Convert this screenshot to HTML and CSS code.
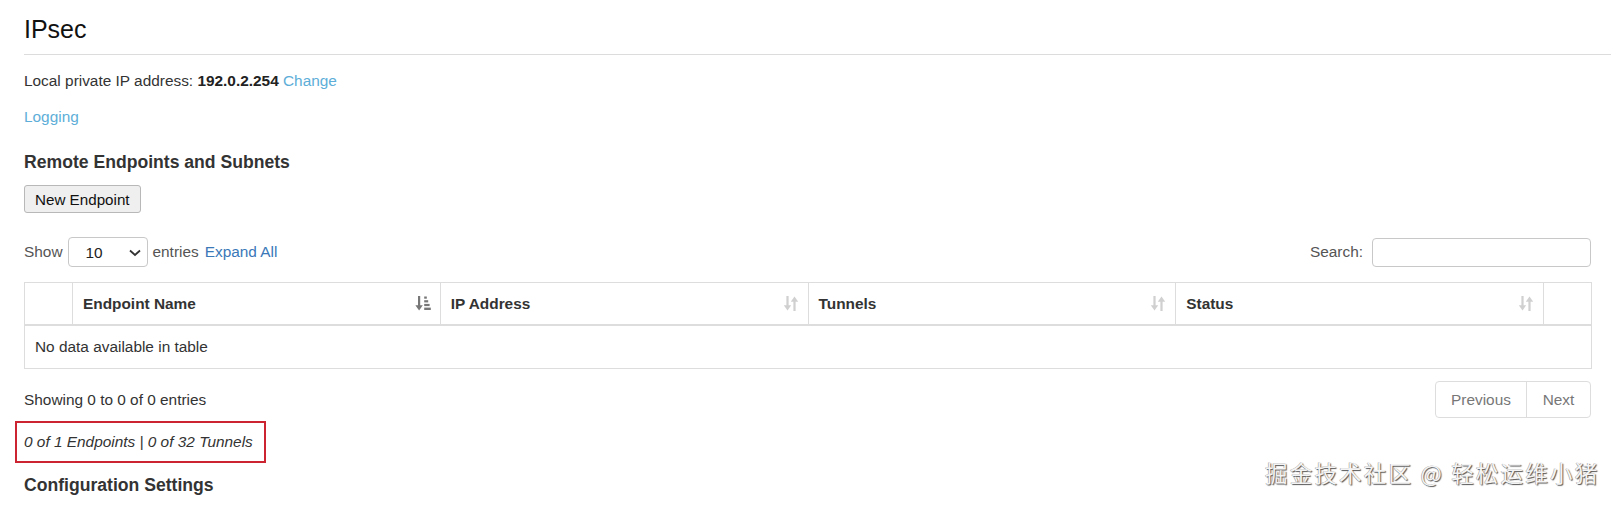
FILE: index.html
```html
<!DOCTYPE html>
<html lang="en">
<head>
<meta charset="utf-8">
<title>IPsec</title>
<link rel="stylesheet" href="styles.css">
</head>
<body>
<div class="page">
  <h1 class="title">IPsec</h1>
  <hr class="rule">
  <p class="line">Local private IP address: <strong>192.0.2.254</strong> <a class="link-light" href="#">Change</a></p>
  <p class="line"><a class="link-light" href="#">Logging</a></p>
  <h3 class="section">Remote Endpoints and Subnets</h3>
  <button class="btn">New Endpoint</button>

  <div class="controls">
    <div class="length">
      <span class="muted">Show</span>
      <span class="select-wrap">
        <select class="select"><option>10</option></select>
        <svg class="chev" width="12" height="8" viewBox="0 0 12 8"><path d="M1 1.5 L6 6 L11 1.5" fill="none" stroke="#333" stroke-width="1.8"/></svg>
      </span>
      <span class="muted">entries</span>
      <a class="link-dark" href="#">Expand All</a>
    </div>
    <label class="search"><span class="muted">Search:</span><input class="search-input" type="text"></label>
  </div>

  <table class="grid">
    <colgroup>
      <col class="c-narrow"><col class="c-wide"><col class="c-wide"><col class="c-wide"><col class="c-wide"><col class="c-narrow">
    </colgroup>
    <thead>
      <tr>
        <th></th>
        <th><div class="th-in"><span>Endpoint Name</span>
          <svg class="sort" width="16" height="17" viewBox="0 0 16 17"><g fill="#777"><rect x="3" y="1" width="2.2" height="10"/><path d="M0.4 10.2 H7.8 L4.1 15.5 Z"/><rect x="9.2" y="1.5" width="2.6" height="2.2"/><rect x="9.2" y="5.2" width="4" height="2.2"/><rect x="9.2" y="8.9" width="5.4" height="2.2"/><rect x="9.2" y="12.6" width="6.6" height="2.4"/></g></svg></div></th>
        <th><div class="th-in"><span>IP Address</span>
          <svg class="sort" width="16" height="17" viewBox="0 0 16 17"><g fill="#d0d0d0"><rect x="3.4" y="1" width="2.2" height="10"/><path d="M0.8 10.2 H8.2 L4.5 15.5 Z"/><rect x="10.4" y="6" width="2.2" height="10"/><path d="M7.8 6.8 H15.2 L11.5 1.5 Z"/></g></svg></div></th>
        <th><div class="th-in"><span>Tunnels</span>
          <svg class="sort" width="16" height="17" viewBox="0 0 16 17"><g fill="#d0d0d0"><rect x="3.4" y="1" width="2.2" height="10"/><path d="M0.8 10.2 H8.2 L4.5 15.5 Z"/><rect x="10.4" y="6" width="2.2" height="10"/><path d="M7.8 6.8 H15.2 L11.5 1.5 Z"/></g></svg></div></th>
        <th><div class="th-in"><span>Status</span>
          <svg class="sort" width="16" height="17" viewBox="0 0 16 17"><g fill="#d0d0d0"><rect x="3.4" y="1" width="2.2" height="10"/><path d="M0.8 10.2 H8.2 L4.5 15.5 Z"/><rect x="10.4" y="6" width="2.2" height="10"/><path d="M7.8 6.8 H15.2 L11.5 1.5 Z"/></g></svg></div></th>
        <th></th>
      </tr>
    </thead>
    <tbody>
      <tr><td colspan="6">No data available in table</td></tr>
    </tbody>
  </table>

  <div class="foot">
    <span>Showing 0 to 0 of 0 entries</span>
    <div class="pager"><a class="pg" href="#">Previous</a><a class="pg" href="#">Next</a></div>
  </div>

  <div class="count"><em>0 of 1 Endpoints | 0 of 32 Tunnels</em></div>

  <h3 class="section config">Configuration Settings</h3>

  <div class="watermark">掘金技术社区 @ 轻松运维小猪</div>
</div>
</body>
</html>
```

FILE: styles.css
```css
html, body {
  margin: 0;
  padding: 0;
  background: #fff;
}
body {
  font-family: "Liberation Sans", Arial, sans-serif;
  font-size: 15.4px;
  color: #333;
  overflow: hidden;
}
.page {
  position: relative;
  padding: 14px 25px 0 24px;
  height: 491px;
}
.title {
  margin: 0;
  font-size: 25px;
  line-height: 30px;
  font-weight: normal;
  color: #111;
}
.rule {
  margin: 10px -20px 0 0;
  border: 0;
  border-top: 1px solid #dcdcdc;
  height: 0;
}
.line {
  margin: 16px 0 0;
  line-height: 20px;
}
.line strong { color: #222; }
.link-light {
  color: #5daed8;
  text-decoration: none;
}
.link-dark {
  color: #3a78b8;
  text-decoration: none;
  margin-left: 1px;
}
.section {
  margin: 25px 0 0;
  font-size: 17.6px;
  line-height: 20px;
  font-weight: bold;
  color: #333;
}
.btn {
  display: block;
  margin-top: 13px;
  height: 28px;
  padding: 0 10px;
  font-family: "Liberation Sans", Arial, sans-serif;
  font-size: 15.2px;
  color: #111;
  background: #efefef;
  border: 1px solid #b8b8b8;
  border-radius: 3px;
}
.controls {
  margin-top: 24px;
  display: flex;
  justify-content: space-between;
  align-items: center;
  height: 30px;
}
.length {
  display: flex;
  align-items: center;
  gap: 5px;
}
.muted { color: #555; }
.select-wrap {
  position: relative;
  display: inline-block;
  height: 30px;
}
.select {
  appearance: none;
  -webkit-appearance: none;
  width: 80px;
  height: 30px;
  padding: 0 0 0 17px;
  font-family: "Liberation Sans", Arial, sans-serif;
  font-size: 15.4px;
  color: #222;
  background: #fff;
  border: 1px solid #c8c8c8;
  border-radius: 4px;
}
.chev {
  position: absolute;
  right: 7px;
  top: 12px;
}
.search {
  display: flex;
  align-items: center;
  gap: 9px;
}
.search-input {
  width: 217px;
  height: 27px;
  padding: 0;
  margin: 0;
  border: 1px solid #c8c8c8;
  border-radius: 4px;
  background: #fff;
}
.grid {
  margin-top: 15px;
  width: 1567px;
  border-collapse: collapse;
  table-layout: fixed;
}
.c-narrow { width: 48px; }
.c-wide { width: 367.75px; }
.grid th {
  border: 1px solid #dddddd;
  border-bottom: 2px solid #dddddd;
  padding: 10px 9px 10px 10px;
  line-height: 21px;
  text-align: left;
  font-weight: bold;
  color: #333;
}
.th-in {
  display: flex;
  justify-content: space-between;
  align-items: center;
}
.sort { display: block; }
.grid td {
  border: 1px solid #dddddd;
  border-top: 0;
  padding: 10px 10px;
  line-height: 22px;
}
.foot {
  margin-top: 12px;
  display: flex;
  justify-content: space-between;
  align-items: center;
  height: 37px;
}
.pager {
  display: flex;
  border: 1px solid #dddddd;
  border-radius: 4px;
  height: 35px;
}
.pg {
  display: flex;
  align-items: center;
  justify-content: center;
  color: #777;
  text-decoration: none;
}
.pg:first-child {
  width: 90px;
  border-right: 1px solid #dddddd;
}
.pg:last-child { width: 63px; }
.count {
  margin: 3px 0 0 -9px;
  width: 240px;
  height: 38px;
  border: 2px solid #cc2531;
  display: flex;
  align-items: center;
  padding-left: 7px;
}
.count em { color: #333; }
.config { margin-top: 12px; }
.watermark {
  position: absolute;
  left: 1265px;
  top: 458px;
  font-family: "Noto Sans CJK SC", sans-serif;
  font-size: 22.5px;
  line-height: 28px;
  letter-spacing: 2.2px;
  color: #f4f4f4;
  text-shadow: 1px 1px 1px #555, -0.5px -0.5px 0 #999;
  white-space: nowrap;
}
```
